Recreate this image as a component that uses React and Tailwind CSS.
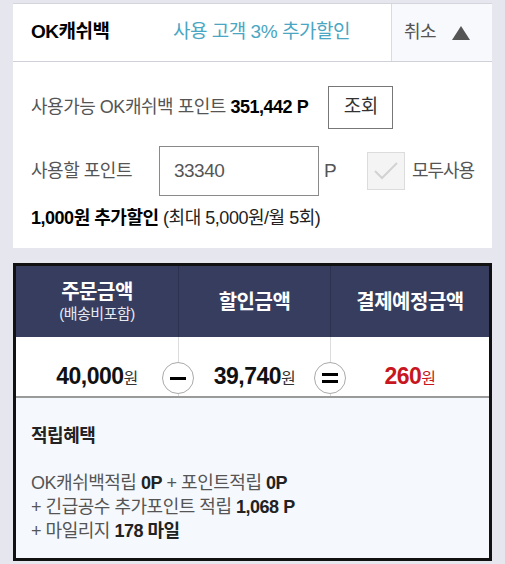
export default function App() {
  const font = { fontFamily: '"Liberation Sans", "Noto Sans CJK KR", sans-serif' };

  return (
    <div className="w-[505px] h-[564px] overflow-hidden bg-[#e6e6ee] px-[13px] pt-[3px] tracking-[-0.03em]" style={font}>
      {/* OK캐쉬백 card */}
      <div className="bg-white border-t border-[#d4d4dc]">
        <div className="flex h-[58px] items-stretch border-b border-[#d0d0d8]">
          <div className="flex items-center pl-[18px] w-[160px] text-[19px] font-bold text-black">OK캐쉬백</div>
          <div className="flex items-center flex-1 text-[19px] text-[#4aa6c2]">사용 고객 3% 추가할인</div>
          <div className="flex items-center w-[101px] border-l border-[#d8dbe2] bg-[#f7f9fc] pl-[12px] gap-[16px]">
            <span className="text-[18px] text-[#555]">취소</span>
            <svg width="18" height="14" viewBox="0 0 18 14"><path d="M9 0 L18 14 L0 14 Z" fill="#555" /></svg>
          </div>
        </div>

        <div className="px-[18px] pt-[24px] pb-[16px] text-[#555]">
          <div className="flex items-center h-[43px]">
            <span className="text-[18px]">사용가능 OK캐쉬백 포인트 <b className="text-black">351,442 P</b></span>
            <button className="ml-[20px] w-[65px] h-[43px] border border-[#777] text-[19px] text-[#333] bg-white">조회</button>
          </div>
          <div className="flex items-center mt-[17px] h-[50px] whitespace-nowrap">
            <span className="w-[128px] text-[18px]">사용할 포인트</span>
            <div className="w-[160px] h-[50px] border border-[#8a8a8a] flex items-center pl-[14px] text-[19px] text-[#555]">33340</div>
            <span className="ml-[5px] text-[19px]">P</span>
            <div className="ml-[31px] w-[38px] h-[38px] shrink-0 border border-[#dcdcdc] bg-[#f4f4f4] flex items-center justify-center">
              <svg width="26" height="20" viewBox="0 0 26 20"><path d="M2 10 L9 17 L24 2" fill="none" stroke="#d2d2d2" strokeWidth="2" /></svg>
            </div>
            <span className="ml-[7px] text-[18px] tracking-[-0.06em]">모두사용</span>
          </div>
          <div className="mt-[9px] text-[18px] text-[#222]">
            <b className="text-black">1,000원 추가할인</b> (최대 5,000원/월 5회)
          </div>
        </div>
      </div>

      {/* 결제 summary */}
      <div className="mt-[15px] h-[298px] flex flex-col border-[3px] border-[#111] bg-white">
        <div className="flex h-[71px] shrink-0 bg-[#363d5e] text-white">
          <div className="w-[163px] flex flex-col items-center justify-center border-r border-[#2c3250]">
            <span className="text-[20px] font-bold leading-[24px]">주문금액</span>
            <span className="text-[15px] text-[#e6e8f0] leading-[20px]">(배송비포함)</span>
          </div>
          <div className="w-[152px] flex items-center justify-center border-r border-[#2c3250] text-[20px] font-bold">할인금액</div>
          <div className="flex-1 flex items-center justify-center text-[20px] font-bold">결제예정금액</div>
        </div>

        <div className="flex h-[61px] shrink-0 border-b-[2px] border-[#9a9a9a]">
          <div className="w-[163px] relative flex items-center justify-center border-r border-[#dcdcdc] pt-[20px]">
            <span className="text-[23px] font-bold text-[#111]">40,000<span className="text-[16px] font-normal text-[#333]">원</span></span>
            <div className="absolute right-[-16px] top-[25px] w-[32px] h-[32px] rounded-full border border-[#aaa] bg-white flex items-center justify-center">
              <div className="w-[16px] h-[3px] bg-black" />
            </div>
          </div>
          <div className="w-[152px] relative flex items-center justify-center border-r border-[#dcdcdc] pt-[20px]">
            <span className="text-[23px] font-bold text-[#111]">39,740<span className="text-[16px] font-normal text-[#333]">원</span></span>
            <div className="absolute right-[-16px] top-[25px] w-[32px] h-[32px] rounded-full border border-[#aaa] bg-white flex flex-col items-center justify-center gap-[4px]">
              <div className="w-[16px] h-[3px] bg-black" />
              <div className="w-[16px] h-[3px] bg-black" />
            </div>
          </div>
          <div className="flex-1 flex items-center justify-center pt-[20px]">
            <span className="text-[23px] font-bold text-[#c8161e]">260<span className="text-[16px] font-normal">원</span></span>
          </div>
        </div>

        <div className="flex-1 bg-[#f5f8fc] px-[15px] pt-[25px] text-[18px] text-[#555]">
          <div className="font-bold text-[#222]">적립혜택</div>
          <div className="mt-[21px] leading-[24px]">
            <div>OK캐쉬백적립 <b className="text-[#222]">0P</b> + 포인트적립 <b className="text-[#222]">0P</b></div>
            <div>+ 긴급공수 추가포인트 적립 <b className="text-[#222]">1,068 P</b></div>
            <div>+ 마일리지 <b className="text-[#222]">178 마일</b></div>
          </div>
        </div>
      </div>
    </div>
  );
}
